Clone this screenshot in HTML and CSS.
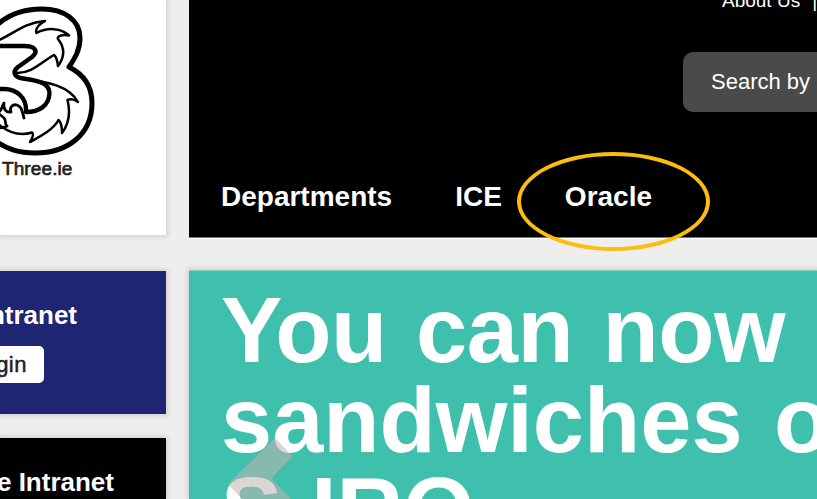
FILE: index.html
```html
<!DOCTYPE html>
<html lang="en">
<head>
<meta charset="utf-8">
<title>Three Intranet</title>
<link rel="stylesheet" href="styles.css">
</head>
<body>
<div class="page">
  <aside class="sidebar">
    <section class="card brand">
      <svg class="logo" viewBox="0 0 110 160" fill="none" stroke="#000" stroke-linejoin="round" stroke-linecap="round">
        <path stroke-width="5" d="M-3 25C8 15 24 9 42 9C64 9 80 20 80 38C80 50 75 58 69 67C83 74 92 85 92 103C92 135 67 153 35 153C18 153 8 149 -3 142"/>
        <path stroke-width="4.4" d="M-3 46H24C35 46 39 51 32 57L18 67C12 72 14 77 23 78.500C40 81 49 83 49.500 93C49 106 39 112 26 112C27 98 17 89 4 89H-3"/>
        <path stroke-width="2.500" d="M-3 41C14 34 23 23 45 21C38 25 35 29 36.500 33C48 27 61 28 69 35.500C62 34 57 36 58 39C66 49 64 58 58 66C57 60 57 57 54 55C40 63 32 73 17 73"/>
        <path stroke-width="2.500" d="M24 79C49 82 69 86 78 102C74 99 70 99 67.500 100C71 114 68 125 62 133C62 126 61 122 58.500 120C53 130 41 136 30 142C33 137 34 134 32 132.500C17 137 6 131 -3 123"/>
        <path stroke-width="2.800" d="M-2 128C2 128 5 127 7 126C4 124 7 121 4 118C2 116 0 115 -2 113M-2 112C2 112 1 107 4 103C3 109 6 113 11 112C9 107 13 104 17 105C22 107 22 111 24 118"/>
      </svg>
      <div class="brand-name">Three.ie</div>
    </section>
    <section class="card login">
      <h2>Intranet</h2>
      <a class="button">Login</a>
    </section>
    <section class="card three"><h2>Three Intranet</h2></section>
  </aside>
  <main class="main">
    <header class="header">
      <div class="links"><span>About Us</span><span>|</span></div>
      <div class="search">Search by</div>
      <nav class="nav"><a>Departments</a><a>ICE</a><a class="oracle">Oracle<i class="ring"></i></a></nav>
    </header>
    <section class="hero">
      <h1><span class="first">You can now o</span><span class="second">sandwiches on</span><span class="third">S IRO</span></h1>
      <svg class="arrow" viewBox="0 0 70 70"><path d="M50 9L68 28L47 50L66 70H17L3 55Z" fill="#c0b4b2" fill-opacity=".56"/><path d="M67 28L47 50" stroke="#58877f" stroke-opacity=".5"/></svg>
    </section>
  </main>
</div>
</body>
</html>
```
FILE: styles.css
```css
* { box-sizing: border-box; }
body { margin: 0; background: #eee; font-family: "Liberation Sans", Arial, sans-serif; overflow: hidden; }
h1, h2 { margin: 0; }
.page { display: grid; grid-template-columns: 166px 1fr; gap: 23px; width: 817px; height: 499px; overflow: hidden; }
.sidebar { display: flex; flex-direction: column; }
.card { box-shadow: 0 0 5px 2px rgba(0,0,0,.12); }
.brand { height: 235px; background: #fff; margin-bottom: 36px; }
.logo { display: block; width: 110px; height: 160px; }
.brand-name { margin-left: 2px; margin-top: -2px; font-size: 19px; line-height: 22px; color: #222; -webkit-text-stroke: .7px #222; letter-spacing: .1px; }
.login { height: 143px; background: #1e2572; margin-bottom: 24px; padding-top: 29px; display: flex; flex-direction: column; align-items: flex-start; }
h2 { color: #fff; font-size: 26px; line-height: 30px; white-space: nowrap; display: flex; justify-content: flex-end; }
.login h2 { width: 77px; }
.button { display: flex; justify-content: flex-end; align-items: center; width: 44px; height: 37px; margin-top: 16px; padding-right: 17px; border-radius: 0 5px 5px 0; background: #fff; color: #222; font-size: 22px; letter-spacing: .5px; -webkit-text-stroke: .5px #222; }
.three { flex: 1; background: #000; padding-top: 29px; }
.three h2 { width: 114px; }
.main { display: flex; flex-direction: column; min-width: 0; }
.header { height: 238px; background: #000; color: #fff; display: flex; flex-direction: column; flex: none; border-bottom: 1px solid #777; box-shadow: 0 1px 0 #fff; }
.links { display: flex; gap: 12px; margin-left: 533px; margin-top: -10px; font-size: 19px; line-height: 22px; height: 22px; white-space: nowrap; }
.search { margin: 40px 0 0 494px; height: 60px; padding-left: 28px; border-radius: 10px 0 0 10px; background: #4a4a4b; font-size: 22px; line-height: 60px; white-space: nowrap; }
.nav { display: flex; gap: 63px; margin: 68px 0 0 32px; font-size: 28px; line-height: 34px; font-weight: bold; }
.oracle { position: relative; }
.ring { position: absolute; left: -48px; top: -28px; width: 193px; height: 99px; border: 4px solid #fcbd0c; border-radius: 50%; }
.hero { position: relative; flex: 1; margin-top: 32px; background: #3fc0ac; border-top: 1px solid #8fcfc2; box-shadow: 0 0 5px 2px rgba(0,0,0,.12); }
h1 { padding: 14px 0 0 32px; color: #fff; font-size: 92px; line-height: 90px; height: 228px; overflow: hidden; }
h1 span { display: block; white-space: nowrap; }
h1 .first { word-spacing: 4px; letter-spacing: -.4px; font-kerning: normal; }
h1 .second { word-spacing: 6px; }
h1 .third { word-spacing: 3px; }
.arrow { position: absolute; left: 36px; top: 158px; width: 70px; height: 70px; }
```
